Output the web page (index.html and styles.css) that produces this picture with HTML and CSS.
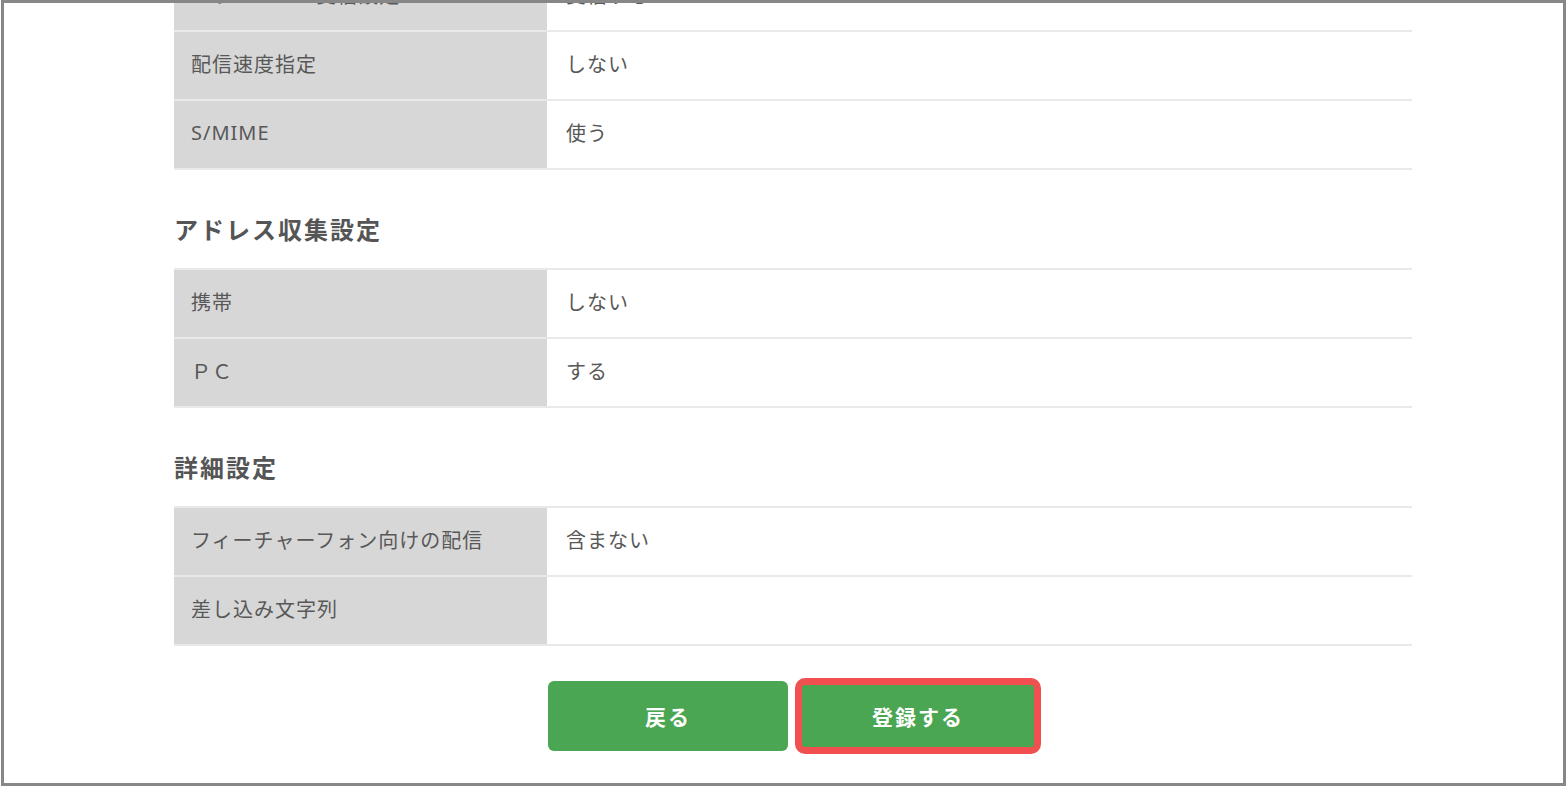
FILE: index.html
```html
<!DOCTYPE html>
<html lang="ja">
<head>
    <meta charset="UTF-8">
    <meta name="viewport" content="width=device-width, initial-scale=1.0">
    <title>配信設定の確認</title>
    <link rel="stylesheet" href="styles.css">
</head>
<body>
    <div class="frame">
        <div class="content">
            <div class="table">
                <div class="row">
                    <div class="label">エラーメール受信設定</div>
                    <div class="value">受信する</div>
                </div>
                <div class="row">
                    <div class="label">配信速度指定</div>
                    <div class="value">しない</div>
                </div>
                <div class="row">
                    <div class="label">S/MIME</div>
                    <div class="value">使う</div>
                </div>
            </div>

            <h2 class="section-title">アドレス収集設定</h2>
            <div class="table">
                <div class="row">
                    <div class="label">携帯</div>
                    <div class="value">しない</div>
                </div>
                <div class="row">
                    <div class="label">ＰＣ</div>
                    <div class="value">する</div>
                </div>
            </div>

            <h2 class="section-title">詳細設定</h2>
            <div class="table">
                <div class="row">
                    <div class="label">フィーチャーフォン向けの配信</div>
                    <div class="value">含まない</div>
                </div>
                <div class="row">
                    <div class="label">差し込み文字列</div>
                    <div class="value"></div>
                </div>
            </div>

            <div class="actions">
                <button class="btn">戻る</button>
                <button class="btn highlight">登録する</button>
            </div>
        </div>
    </div>
</body>
</html>
```

FILE: styles.css
```css
body {
    margin: 0;
    padding: 0;
    background-color: #ffffff;
    font-family: "Noto Sans", "Noto Sans CJK JP", sans-serif;
    color: #585858;
}
.frame {
    box-sizing: border-box;
    width: 1565px;
    height: 786px;
    margin-left: 1px;
    border: 3px solid #878787;
    overflow: hidden;
}
.content {
    width: 1238px;
    margin: -42px 0 0 170px;
}
.table {
    border-bottom: 2px solid #e9e9e9;
}
.row {
    display: grid;
    grid-template-columns: 373px 1fr;
    height: 69px;
    box-sizing: border-box;
    border-top: 2px solid #e9e9e9;
}
.label, .value {
    display: flex;
    align-items: center;
    font-size: 20px;
    letter-spacing: 1px;
    padding-bottom: 4px;
}
.label {
    background-color: #d7d7d7;
    padding-left: 17px;
}
.value {
    padding-left: 19px;
}
.section-title {
    margin: 42px 0 20px;
    font-size: 24px;
    line-height: 36px;
    letter-spacing: 2px;
    font-weight: bold;
    color: #555555;
}
.actions {
    display: flex;
    justify-content: center;
    gap: 10px;
    margin-top: 35px;
}
.btn {
    width: 240px;
    height: 70px;
    border: none;
    border-radius: 6px;
    background-color: #4aa652;
    color: #ffffff;
    font-family: "Noto Sans CJK JP", sans-serif;
    font-size: 21px;
    font-weight: bold;
    letter-spacing: 2px;
    cursor: pointer;
}
.highlight {
    box-shadow: 0 0 0 3px #f44f50, inset 0 0 0 4px #f44f50;
    border-radius: 7px;
}
```
